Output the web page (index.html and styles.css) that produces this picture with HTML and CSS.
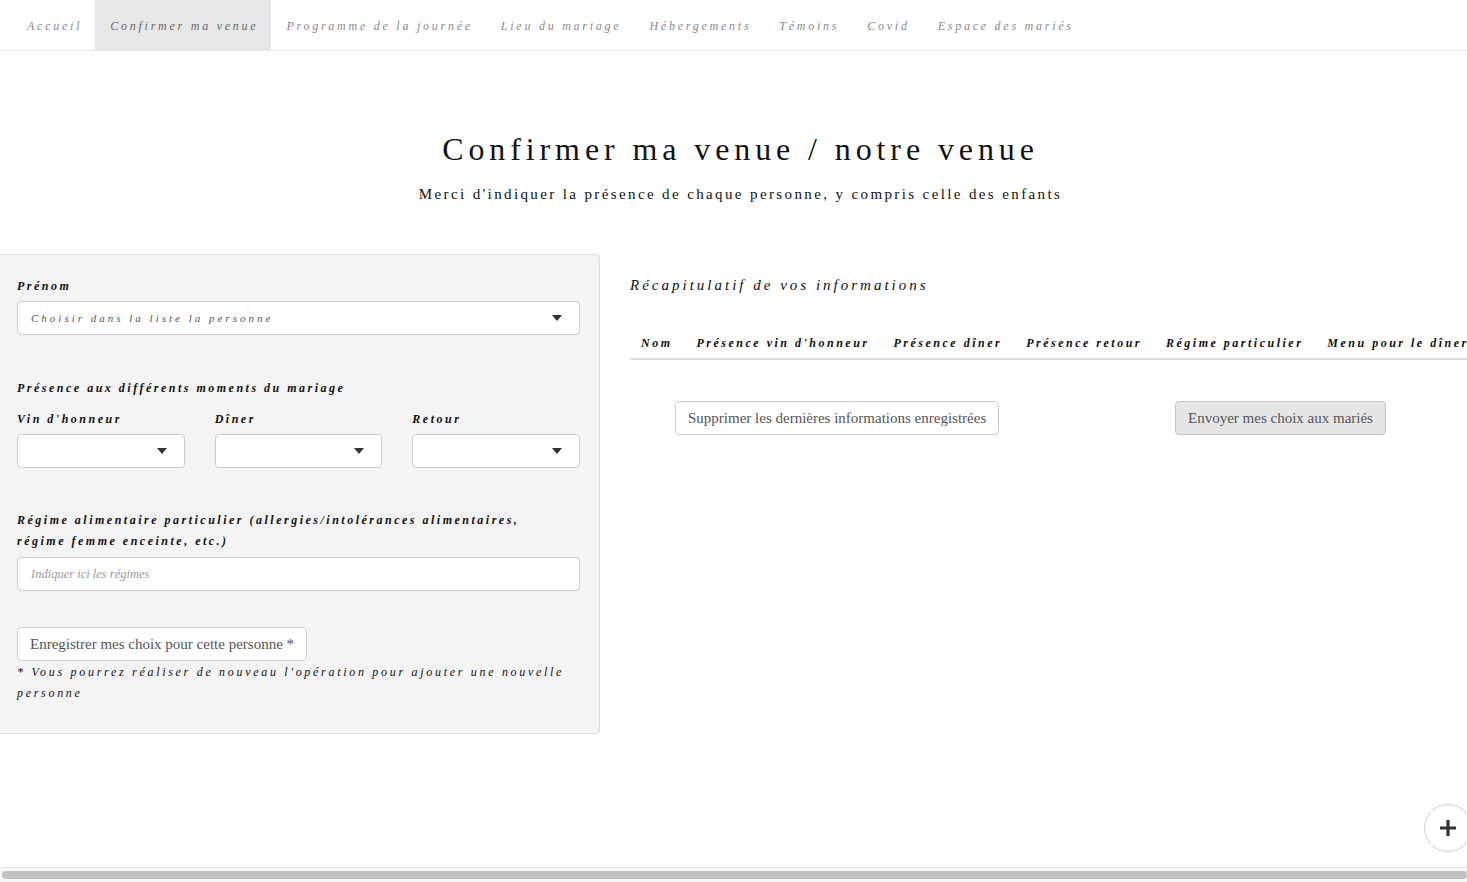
FILE: index.html
```html
<!DOCTYPE html>
<html lang="fr">
<head>
<meta charset="utf-8">
<title>Confirmer ma venue</title>
<link rel="stylesheet" href="styles.css">
</head>
<body>
<nav class="topnav">
  <ul class="menu">
    <li><a href="#">Accueil</a></li>
    <li class="active"><a href="#">Confirmer ma venue</a></li>
    <li><a href="#">Programme de la journée</a></li>
    <li><a href="#">Lieu du mariage</a></li>
    <li><a href="#">Hébergements</a></li>
    <li><a href="#">Témoins</a></li>
    <li><a href="#">Covid</a></li>
    <li><a href="#">Espace des mariés</a></li>
  </ul>
</nav>

<main class="page">
  <header class="intro">
    <h1 class="title">Confirmer ma venue / notre venue</h1>
    <p class="subtitle">Merci d'indiquer la présence de chaque personne, y compris celle des enfants</p>
  </header>

  <div class="layout">
    <section class="panel">
      <label class="lbl">Prénom</label>
      <div class="select select-wide">
        <span class="ph">Choisir dans la liste la personne</span>
        <svg class="caret" width="10" height="6" viewBox="0 0 10 6"><path d="M0 0h10L5 6z" fill="#333"/></svg>
      </div>

      <div class="lbl lbl-group">Présence aux différents moments du mariage</div>
      <div class="trio">
        <div class="field">
          <label class="lbl">Vin d'honneur</label>
          <div class="select"><span class="ph"></span><svg class="caret" width="10" height="6" viewBox="0 0 10 6"><path d="M0 0h10L5 6z" fill="#333"/></svg></div>
        </div>
        <div class="field">
          <label class="lbl">Dîner</label>
          <div class="select"><span class="ph"></span><svg class="caret" width="10" height="6" viewBox="0 0 10 6"><path d="M0 0h10L5 6z" fill="#333"/></svg></div>
        </div>
        <div class="field">
          <label class="lbl">Retour</label>
          <div class="select"><span class="ph"></span><svg class="caret" width="10" height="6" viewBox="0 0 10 6"><path d="M0 0h10L5 6z" fill="#333"/></svg></div>
        </div>
      </div>

      <label class="lbl lbl-diet">Régime alimentaire particulier (allergies/intolérances alimentaires, régime femme enceinte, etc.)</label>
      <div class="input"><span class="ph-small">Indiquer ici les régimes</span></div>

      <button class="btn btn-save">Enregistrer mes choix pour cette personne *</button>
      <p class="note">* Vous pourrez réaliser de nouveau l'opération pour ajouter une nouvelle personne</p>
    </section>

    <section class="recap">
      <h3 class="recap-title">Récapitulatif de vos informations</h3>
      <div class="table-wrap">
        <table class="recap-table">
          <thead>
            <tr>
              <th>Nom</th>
              <th>Présence vin d'honneur</th>
              <th>Présence dîner</th>
              <th>Présence retour</th>
              <th>Régime particulier</th>
              <th>Menu pour le dîner</th>
            </tr>
          </thead>
        </table>
      </div>
      <div class="actions">
        <button class="btn">Supprimer les dernières informations enregistrées</button>
        <button class="btn btn-grey">Envoyer mes choix aux mariés</button>
      </div>
    </section>
  </div>
</main>

<button class="fab" aria-label="Ajouter">
  <svg width="18" height="18" viewBox="0 0 18 18"><path d="M9 1v16M1 9h16" stroke="#333" stroke-width="3.2"/></svg>
</button>

<div class="hscroll"><div class="hscroll-thumb"></div></div>
</body>
</html>
```

FILE: styles.css
```css
html, body {
  margin: 0;
  padding: 0;
  overflow: hidden;
  background: #fff;
}
body {
  font-family: "Liberation Serif", "DejaVu Serif", serif;
  color: #111;
  width: 1467px;
  height: 882px;
}

/* Top nav */
.topnav {
  height: 50px;
  border-bottom: 1px solid #e7e7e7;
}
.menu {
  list-style: none;
  margin: 0;
  padding: 0 0 0 12px;
  display: flex;
  height: 50px;
}
.menu li {
  display: flex;
}
.menu a {
  display: flex;
  align-items: center;
  padding: 2px 13px 0 15px;
  font-style: italic;
  font-size: 12px;
  letter-spacing: 2.75px;
  color: #8a8a8a;
  text-decoration: none;
}
.menu li.active a {
  background: #e7e7e7;
  color: #666;
}

/* Intro */
.intro {
  text-align: center;
  padding: 76px 0 0 14px;
}
.title {
  margin: 0;
  font-weight: normal;
  font-size: 32px;
  line-height: 44px;
  letter-spacing: 4.9px;
  color: #111;
}
.subtitle {
  margin: 12px 0 0;
  font-size: 15px;
  line-height: 22px;
  letter-spacing: 2.38px;
  color: #111;
}

.layout {
  display: grid;
  grid-template-columns: 600px 1fr;
  column-gap: 30px;
  margin-top: 49px;
  align-items: start;
}

/* Left panel */
.panel {
  box-sizing: border-box;
  background: #f4f4f4;
  border: 1px solid #ddd;
  border-left: none;
  border-radius: 0 4px 4px 0;
  padding: 21px 19px 29px 17px;
  display: flex;
  flex-direction: column;
}
.lbl {
  display: block;
  font-style: italic;
  font-weight: bold;
  font-size: 12px;
  line-height: 21px;
  letter-spacing: 2.5px;
  color: #111;
}
.lbl-group {
  margin-top: 43px;
}
.select, .input {
  box-sizing: border-box;
  height: 34px;
  background: #fff;
  border: 1px solid #ccc;
  border-radius: 4px;
  display: flex;
  align-items: center;
  justify-content: space-between;
  padding: 0 17px 0 13px;
  margin-top: 4px;
}
.ph {
  font-style: italic;
  font-size: 11px;
  letter-spacing: 3px;
  color: #555;
}
.caret {
  flex: none;
}
.trio {
  display: grid;
  grid-template-columns: repeat(3, 1fr);
  column-gap: 30px;
  margin-top: 10px;
}
.lbl-diet {
  margin-top: 42px;
  max-width: 515px;
}
.input {
  margin-top: 5px;
}
.ph-small {
  font-style: italic;
  font-size: 12.5px;
  color: #999;
  letter-spacing: 0;
}

.btn {
  box-sizing: border-box;
  height: 34px;
  font-family: "Liberation Serif", "DejaVu Serif", serif;
  font-size: 15px;
  color: #555;
  background: #fff;
  border: 1px solid #ccc;
  border-radius: 4px;
  padding: 0 12px;
  cursor: pointer;
  white-space: nowrap;
}
.btn-save {
  align-self: flex-start;
  margin-top: 36px;
}
.btn-grey {
  background: #e6e6e6;
  border-color: #c4c4c4;
}
.note {
  margin: 1px 0 0;
  font-style: italic;
  font-size: 12px;
  line-height: 21px;
  letter-spacing: 2.7px;
  color: #111;
}

/* Recap */
.recap {
  min-width: 0;
}
.recap-title {
  margin: 21px 0 0;
  font-weight: normal;
  font-style: italic;
  font-size: 15px;
  line-height: 20px;
  letter-spacing: 3px;
  color: #111;
}
.table-wrap {
  overflow: hidden;
  margin-top: 30px;
  margin-right: -60px;
}
.recap-table {
  border-collapse: collapse;
  white-space: nowrap;
  margin-left: -1px;
}
.recap-table th {
  text-align: left;
  font-style: italic;
  font-weight: bold;
  font-size: 12px;
  line-height: 20px;
  letter-spacing: 2.5px;
  color: #111;
  padding: 8px 12px 5px;
  border-bottom: 2px solid #ddd;
}
.actions {
  display: grid;
  grid-template-columns: 500px auto;
  justify-items: start;
  padding-left: 45px;
  margin-top: 41px;
}

/* Floating button */
.fab {
  position: fixed;
  right: -5px;
  bottom: 30px;
  width: 48px;
  height: 48px;
  border-radius: 50%;
  border: 1px solid #ccc;
  background: #fff;
  display: flex;
  align-items: center;
  justify-content: center;
  padding: 0;
}

/* Horizontal scrollbar look */
.hscroll {
  position: fixed;
  left: 0;
  right: 0;
  bottom: 0;
  height: 15px;
  box-sizing: border-box;
  background: #f7f7f7;
  border-top: 1px solid #e6e6e6;
  padding: 3px 0 3px 2px;
}
.hscroll-thumb {
  height: 8px;
  border-radius: 4px;
  background: #c1c1c1;
}
```
